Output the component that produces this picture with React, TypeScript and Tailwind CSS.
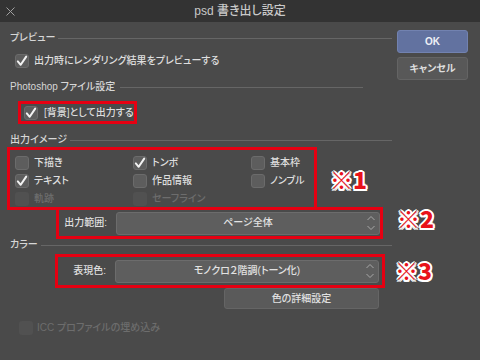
import React from "react";

const FONT =
  "font-['Helvetica_Neue','Liberation_Sans','Noto_Sans_CJK_JP',sans-serif] [font-feature-settings:'palt'] font-medium";

const ANNOT =
  "absolute font-['Noto_Sans_CJK_JP',sans-serif] font-black text-[23px] leading-none text-[#e8121a] [text-shadow:2px_0_0_#fff,-2px_0_0_#fff,0_2px_0_#fff,0_-2px_0_#fff,1.5px_1.5px_0_#fff,-1.5px_-1.5px_0_#fff,1.5px_-1.5px_0_#fff,-1.5px_1.5px_0_#fff]";

interface CheckProps {
  label: string;
  checked?: boolean;
  disabled?: boolean;
  gap?: string;
}

/**
 * Small dark checkbox with label
 */
const Check: React.FC<CheckProps> = ({ label, checked, disabled, gap = "gap-[5px]" }) => {
  return (
    <div className={`flex items-center ${gap}`}>
      <div
        className={`w-[14px] h-[14px] rounded-[3px] flex items-center justify-center ${
          disabled
            ? "bg-[#515151]"
            : "bg-[#5d5d5d] border border-[#6b6b6b]"
        }`}
      >
        {checked && (
          <svg width="12" height="12" viewBox="0 0 12 12">
            <path
              d="M1.8 6.4 L4.7 9.8 L10.2 1.6"
              fill="none"
              stroke="#f2f2f2"
              strokeWidth="2"
              strokeLinecap="round"
              strokeLinejoin="round"
            />
          </svg>
        )}
      </div>
      <span
        className={`text-[10px] leading-none ${
          disabled ? "text-[#6d6d6d]" : "text-[#dedede]"
        }`}
      >
        {label}
      </span>
    </div>
  );
};

/**
 * Section heading followed by a thin rule
 */
const Section: React.FC<{ title: string; className?: string; lineEnd?: string }> = ({
  title,
  className = "",
  lineEnd = "",
}) => (
  <div className={`h-[14px] flex items-center ${className}`}>
    <span className="text-[10px] leading-none text-[#d6d6d6] whitespace-nowrap">{title}</span>
    <div className={`flex-1 h-px bg-[#666] ml-[3px] ${lineEnd}`} />
  </div>
);

const Chevrons = () => (
  <svg width="10" height="18" viewBox="0 0 10 18" className="mr-[3px]">
    <path d="M1.5 6 L5 2.5 L8.5 6" fill="none" stroke="#a8a8a8" strokeWidth="1" />
    <path d="M1.5 12 L5 15.5 L8.5 12" fill="none" stroke="#a8a8a8" strokeWidth="1" />
  </svg>
);

const Select: React.FC<{ value: string; className?: string }> = ({ value, className = "" }) => (
  <div
    className={`w-[264px] flex items-center bg-[#5e5e5e] border border-[#6c6c6c] rounded-[3px] ${className}`}
  >
    <span className="flex-1 text-center text-[10px] leading-none text-[#e2e2e2] pl-[13px]">{value}</span>
    <Chevrons />
  </div>
);

export default function App() {
  return (
    <div className={`w-[480px] h-[360px] flex flex-col bg-[#4a4a4a] ${FONT}`}>
      {/* title bar */}
      <div className="h-[22px] bg-[#333333] flex items-center relative">
        <svg width="9" height="9" viewBox="0 0 9 9" className="ml-[6px]">
          <path d="M0.5 0.5 L8.5 8.5 M8.5 0.5 L0.5 8.5" stroke="#a0a0a0" strokeWidth="1" />
        </svg>
        <span className="absolute left-0 right-0 text-center text-[12px] leading-none text-[#c9c9c9] font-medium">
          psd 書き出し設定
        </span>
      </div>

      <div className="flex-1 flex relative">
        {/* left column */}
        <div className="w-[392px] pl-[10px] pt-[9px] flex flex-col">
          <Section title="プレビュー" />
          <div className="h-[16px] mt-[8px] ml-[5px] flex items-center">
            <Check label="出力時にレンダリング結果をプレビューする" checked />
          </div>

          <Section title="Photoshop ファイル設定" className="mt-[11px]" lineEnd="mr-[29px] ml-[5px]" />
          <div className="mt-[7px] ml-[8px] w-[119px] h-[23px] border-[3px] border-[#e60012] pl-[3px] flex items-center">
            <Check label="[背景]として出力する" checked gap="gap-[6px]" />
          </div>

          <Section title="出力イメージ" className="mt-[9px]" />
          <div className="-ml-[3px] w-[310px] h-[63px] border-[3px] border-[#e60012] pl-[5px] pt-[4px] grid grid-cols-[118px_118px_1fr] grid-rows-[18px_18px_17px]">
            <div className="flex items-center"><Check label="下描き" /></div>
            <div className="flex items-center"><Check label="トンボ" checked /></div>
            <div className="flex items-center"><Check label="基本枠" /></div>
            <div className="flex items-center"><Check label="テキスト" checked /></div>
            <div className="flex items-center"><Check label="作品情報" /></div>
            <div className="flex items-center"><Check label="ノンブル" /></div>
            <div className="flex items-center"><Check label="軌跡" disabled /></div>
            <div className="flex items-center"><Check label="セーフライン" disabled /></div>
          </div>

          <div className="-mt-[3px] ml-[46px] w-[327px] h-[32px] border-[3px] border-[#e60012] flex items-center">
            <span className="w-[48px] text-right text-[10px] leading-none text-[#dedede]">出力範囲:</span>
            <Select value="ページ全体" className="ml-[9px] h-[23px]" />
          </div>

          <Section title="カラー" className="-mt-[1px]" />
          <div className="mt-[2px] ml-[45px] w-[330px] h-[34px] border-[3px] border-[#e60012] flex items-center">
            <span className="w-[48px] text-right text-[10px] leading-none text-[#dedede]">表現色:</span>
            <Select value="モノクロ２階調(トーン化)" className="ml-[9px] h-[23px]" />
          </div>
          <div className="ml-[214px] w-[155px] h-[21px] bg-[#5a5a5a] border border-[#656565] rounded-[3px] flex items-center justify-center">
            <span className="text-[10px] leading-none text-[#e0e0e0]">色の詳細設定</span>
          </div>

          <div className="h-[16px] mt-[11px] ml-[9px] flex items-center">
            <Check label="ICC プロファイルの埋め込み" disabled gap="gap-[4px]" />
          </div>
        </div>

        {/* right column: buttons */}
        <div className="pl-[5px] pt-[8px] flex flex-col gap-[4px]">
          <div className="w-[71px] h-[23px] rounded-[3px] bg-[#6272a0] border border-[#7282b0] flex items-center justify-center">
            <span className="text-[10px] leading-none font-bold text-[#eef0f6]">OK</span>
          </div>
          <div className="w-[71px] h-[23px] rounded-[3px] bg-[#585858] border border-[#646464] flex items-center justify-center">
            <span className="text-[10px] leading-none font-bold text-[#dedede]">キャンセル</span>
          </div>
        </div>

        {/* annotation marks */}
        <span className={`${ANNOT} left-[330px] top-[146px]`}>※1</span>
        <span className={`${ANNOT} left-[397px] top-[185px]`}>※2</span>
        <span className={`${ANNOT} left-[395px] top-[237px]`}>※3</span>
      </div>
    </div>
  );
}
